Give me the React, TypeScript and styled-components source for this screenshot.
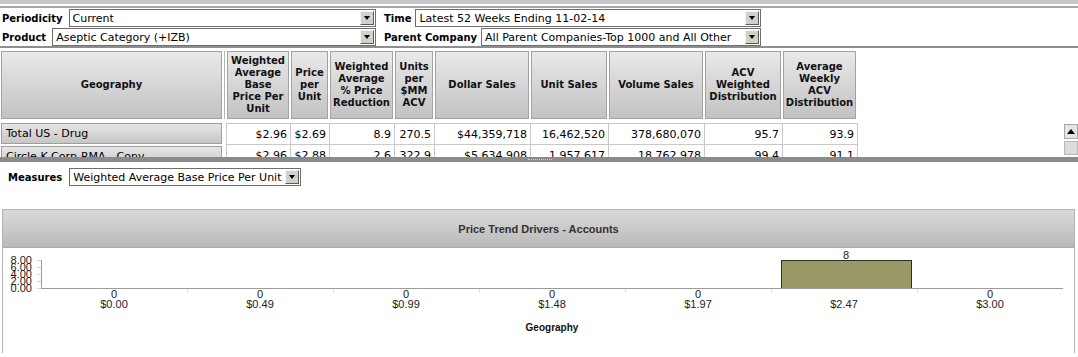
import React from "react";
import styled, { createGlobalStyle } from "styled-components";

const GlobalStyle = createGlobalStyle`
  * { box-sizing: border-box; }
  html, body { margin: 0; padding: 0; background: #ffffff; }
  body {
    font-family: "DejaVu Sans", Verdana, sans-serif;
    color: #000;
  }
`;

const Page = styled.div`
  width: 1078px;
  height: 357px;
  overflow: hidden;
  display: flex;
  flex-direction: column;
  background: #fff;
  & > * { flex-shrink: 0; }
`;

const TopStrip = styled.div`
  height: 8px;
  border-top: 4px solid #c6c6c6;
  border-bottom: 2px solid #a6a6a6;
  background: #fff;
`;

const FilterPanel = styled.div`
  display: flex;
  flex-direction: column;
  gap: 1px;
  padding: 1px 0 0 2px;
  height: 40px;
  border-bottom: 2px solid #8e8e8e;
`;

const FilterRow = styled.div`
  display: flex;
  gap: 8px;
  height: 18px;
`;

const Field = styled.div<{ $w: number; $gap: number }>`
  display: flex;
  align-items: center;
  width: ${(p) => p.$w}px;
  gap: ${(p) => p.$gap}px;
`;

const Label = styled.span`
  font-weight: bold;
  font-size: 10px;
  white-space: nowrap;
`;

const SelectBox = styled.div<{ $w?: number }>`
  display: flex;
  align-items: center;
  height: 18px;
  ${(p) => (p.$w ? `width: ${p.$w}px;` : "flex: 1;")}
  border: 1px solid #6e6e6e;
  background: #fff;
  padding-left: 3px;
  font-size: 11px;
`;

const SelectText = styled.span`
  flex: 1;
  white-space: nowrap;
  overflow: hidden;
`;

const ArrowBtn = styled.span`
  width: 14px;
  height: 14px;
  margin-right: 1px;
  background: #d4d0c8;
  border: 1px solid;
  border-color: #f4f4f4 #5a5a5a #5a5a5a #f4f4f4;
  display: flex;
  align-items: center;
  justify-content: center;
  &::after {
    content: "";
    width: 0;
    height: 0;
    border-left: 3.5px solid transparent;
    border-right: 3.5px solid transparent;
    border-top: 4px solid #000;
  }
`;

const Select = ({ value, w }: { value: string; w?: number }) => (
  <SelectBox $w={w}>
    <SelectText>{value}</SelectText>
    <ArrowBtn />
  </SelectBox>
);

/* ---------- table pane ---------- */

const TablePane = styled.div`
  height: 109px;
  overflow: hidden;
  display: flex;
  padding-top: 3px;
`;

const TableArea = styled.div`
  flex: 1;
  display: flex;
  flex-direction: column;
  & > * { flex-shrink: 0; }
`;

const HeaderGrid = styled.div`
  display: grid;
  grid-template-columns: 221px 1px 62px 37px 63px 38px 94px 76px 94px 76px 73px;
  column-gap: 2px;
  height: 68px;
  margin-left: 1px;
`;

const HeadCell = styled.div`
  display: flex;
  align-items: center;
  justify-content: center;
  text-align: center;
  font-weight: bold;
  font-size: 10px;
  line-height: 12px;
  color: #111;
  border: 1px solid #a2a2a2;
  background: linear-gradient(#e9e9e9, #c2c2c2);
`;

const HeadDivider = styled.div`
  background: #b4b4b4;
`;

const BodyRows = styled.div`
  display: flex;
  align-items: flex-start;
  margin-top: 4px;
`;

const GeoColumn = styled.div`
  width: 221px;
  margin-left: 1px;
  display: flex;
  flex-direction: column;
  gap: 2px;
`;

const GeoCell = styled.div`
  height: 21px;
  display: flex;
  align-items: center;
  padding-left: 4px;
  font-size: 11px;
  white-space: nowrap;
  overflow: hidden;
  border: 1px solid #9e9e9e;
  background: linear-gradient(#e6e6e6, #c6c6c6);
`;

const DataTable = styled.table`
  margin-left: 4px;
  border-collapse: collapse;
  table-layout: fixed;
  width: 632px;
  font-size: 11px;
`;

const DataCell = styled.td`
  height: 21px;
  padding: 0 3px 0 0;
  text-align: right;
  white-space: nowrap;
  border: 1px solid #c9c9c9;
  background: #fff;
`;

const ScrollColumn = styled.div`
  width: 14px;
  padding-top: 73px;
  display: flex;
  flex-direction: column;
  gap: 2px;
`;

const ScrollButton = styled.div`
  height: 15px;
  flex-shrink: 0;
  background: #e4e4e4;
  border: 1px solid #a8a8a8;
  display: flex;
  align-items: center;
  justify-content: center;
  &::after {
    content: "";
    width: 0;
    height: 0;
    border-left: 4px solid transparent;
    border-right: 4px solid transparent;
    border-bottom: 5px solid #000;
  }
`;

const ScrollThumb = styled.div`
  height: 14px;
  flex-shrink: 0;
  background: #dcdcdc;
  border: 1px solid #b8b8b8;
`;

const Splitter = styled.div`
  height: 5px;
  background: #8b8b8b;
  padding-top: 2px;
`;

const Grip = styled.div`
  width: 24px;
  margin-left: 528px;
  border-top: 1px dotted #cfcfcf;
`;

/* ---------- measures + chart ---------- */

const MeasuresRow = styled.div`
  display: flex;
  align-items: center;
  gap: 7px;
  padding: 6px 0 0 8px;
  height: 24px;
`;

const ChartPanel = styled.div`
  margin: 23px 0 0 2px;
  width: 1073px;
  height: 144px;
  border: 1px solid #b2b2b2;
  display: flex;
  flex-direction: column;
`;

const ChartHeader = styled.div`
  height: 38px;
  flex-shrink: 0;
  display: flex;
  align-items: center;
  justify-content: center;
  border-bottom: 1px solid #ababab;
  background: linear-gradient(#dadada, #b9b9b9);
  font-family: "Liberation Sans", Arial, sans-serif;
  font-weight: bold;
  font-size: 11px;
  color: #333;
`;

const ChartBody = styled.div`
  flex: 1;
  background: #fff;
`;

const ChartSvg = styled.svg`
  display: block;
  font-family: "Liberation Sans", Arial, sans-serif;
`;

const headers: React.ReactNode[] = [
  <>Weighted<br />Average<br />Base<br />Price Per<br />Unit</>,
  <>Price<br />per<br />Unit</>,
  <>Weighted<br />Average<br />% Price<br />Reduction</>,
  <>Units<br />per<br />$MM<br />ACV</>,
  <>Dollar Sales</>,
  <>Unit Sales</>,
  <>Volume Sales</>,
  <>ACV<br />Weighted<br />Distribution</>,
  <>Average<br />Weekly<br />ACV<br />Distribution</>,
];

const colWidths = [64, 39, 65, 40, 96, 78, 96, 78, 75];

const rows = [
  {
    geo: "Total US - Drug",
    vals: ["$2.96", "$2.69", "8.9", "270.5", "$44,359,718", "16,462,520", "378,680,070", "95.7", "93.9"],
  },
  {
    geo: "Circle K Corp-RMA - Conv",
    vals: ["$2.96", "$2.88", "2.6", "322.9", "$5,634,908", "1,957,617", "18,762,978", "99.4", "91.1"],
  },
];

const xLabels = ["$0.00", "$0.49", "$0.99", "$1.48", "$1.97", "$2.47", "$3.00"];
const values = [0, 0, 0, 0, 0, 8, 0];

const PLOT_LEFT = 41;
const BAND = 146;
const AXIS_Y = 288;
const TOP_Y = 260;
const MAX = 8;

const Chart = () => {
  const yTicks = [8, 6, 4, 2, 0];
  return (
    <ChartSvg width={1071} height={105} viewBox="3 248 1071 105">
      {yTicks.map((v) => {
        const y = AXIS_Y - ((AXIS_Y - TOP_Y) * v) / MAX;
        return (
          <g key={v}>
            <line x1={37} x2={41} y1={y + 0.5} y2={y + 0.5} stroke="#d6d6d6" />
            <text x={32} y={y + 3.5} fontSize={11} textAnchor="end" fill="#222">
              {v.toFixed(2)}
            </text>
          </g>
        );
      })}
      {values.map((v, i) => {
        if (!v) return null;
        const h = ((AXIS_Y - TOP_Y) * v) / MAX;
        const x0 = PLOT_LEFT + i * BAND;
        return (
          <g key={`bar${i}`}>
            <rect x={x0 + 10.5} y={AXIS_Y - h + 0.5} width={130} height={h} fill="#999966" stroke="#2e2e22" strokeWidth={1} />
            <text x={x0 + 75} y={AXIS_Y - h - 1} fontSize={11} textAnchor="middle" fill="#222">
              {v}
            </text>
          </g>
        );
      })}
      <line x1={PLOT_LEFT + 0.5} x2={PLOT_LEFT + 0.5} y1={TOP_Y} y2={AXIS_Y + 1} stroke="#9c9c9c" />
      <line x1={PLOT_LEFT} x2={PLOT_LEFT + BAND * 7} y1={AXIS_Y + 0.5} y2={AXIS_Y + 0.5} stroke="#9c9c9c" />
      {[1, 2, 3, 4, 5, 6].map((k) => (
        <line
          key={`t${k}`}
          x1={PLOT_LEFT + k * BAND + 0.5}
          x2={PLOT_LEFT + k * BAND + 0.5}
          y1={AXIS_Y + 1}
          y2={AXIS_Y + 5}
          stroke="#dedede"
        />
      ))}
      {xLabels.map((l, i) => {
        const cx = PLOT_LEFT + i * BAND + BAND / 2;
        return (
          <g key={l}>
            {values[i] === 0 && (
              <text x={cx} y={298} fontSize={11} textAnchor="middle" fill="#222">
                0
              </text>
            )}
            <text x={cx} y={308} fontSize={11} textAnchor="middle" fill="#222">
              {l}
            </text>
          </g>
        );
      })}
      <text x={552} y={331} fontSize={10} fontWeight="bold" textAnchor="middle" fill="#111">
        Geography
      </text>
    </ChartSvg>
  );
};

export default function App() {
  return (
    <>
      <GlobalStyle />
      <Page>
        <TopStrip />
        <FilterPanel>
          <FilterRow>
            <Field $w={374} $gap={6}>
              <Label>Periodicity</Label>
              <Select value="Current" />
            </Field>
            <Field $w={377} $gap={4}>
              <Label>Time</Label>
              <Select value="Latest 52 Weeks Ending 11-02-14" />
            </Field>
          </FilterRow>
          <FilterRow>
            <Field $w={374} $gap={6}>
              <Label>Product</Label>
              <Select value="Aseptic Category (+IZB)" />
            </Field>
            <Field $w={377} $gap={4}>
              <Label>Parent Company</Label>
              <Select value="All Parent Companies-Top 1000 and All Other" />
            </Field>
          </FilterRow>
        </FilterPanel>

        <TablePane>
          <TableArea>
            <HeaderGrid>
              <HeadCell>Geography</HeadCell>
              <HeadDivider />
              {headers.map((h, i) => (
                <HeadCell key={i}>{h}</HeadCell>
              ))}
            </HeaderGrid>
            <BodyRows>
              <GeoColumn>
                {rows.map((r) => (
                  <GeoCell key={r.geo}>{r.geo}</GeoCell>
                ))}
              </GeoColumn>
              <DataTable>
                <colgroup>
                  {colWidths.map((w, i) => (
                    <col key={i} style={{ width: w }} />
                  ))}
                </colgroup>
                <tbody>
                  {rows.map((r) => (
                    <tr key={r.geo}>
                      {r.vals.map((v, i) => (
                        <DataCell key={i}>{v}</DataCell>
                      ))}
                    </tr>
                  ))}
                </tbody>
              </DataTable>
            </BodyRows>
          </TableArea>
          <ScrollColumn>
            <ScrollButton />
            <ScrollThumb />
          </ScrollColumn>
        </TablePane>
        <Splitter>
          <Grip />
        </Splitter>

        <MeasuresRow>
          <Label>Measures</Label>
          <Select value="Weighted Average Base Price Per Unit" w={232} />
        </MeasuresRow>

        <ChartPanel>
          <ChartHeader>Price Trend Drivers - Accounts</ChartHeader>
          <ChartBody>
            <Chart />
          </ChartBody>
        </ChartPanel>
      </Page>
    </>
  );
}
